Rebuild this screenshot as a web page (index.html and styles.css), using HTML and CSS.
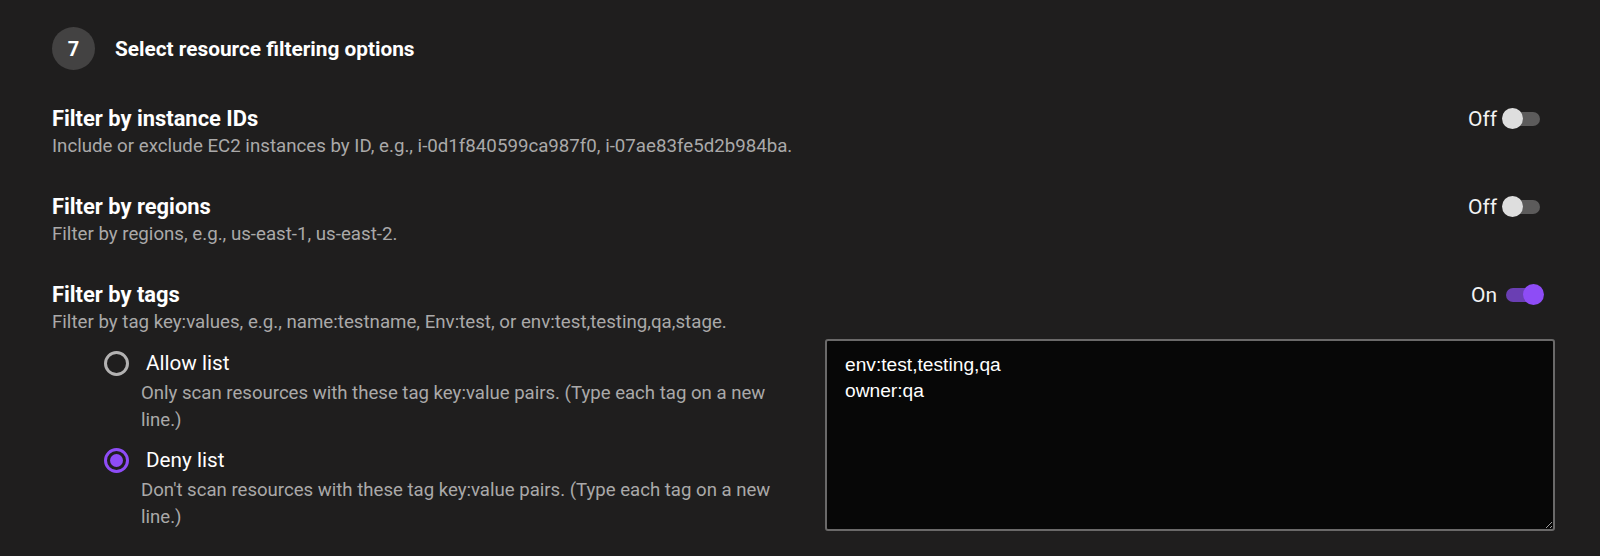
FILE: index.html
```html
<!DOCTYPE html>
<html lang="en">
<head>
    <meta charset="UTF-8">
    <title>Resource filtering</title>
    <link rel="stylesheet" href="styles.css">
</head>
<body>
    <div class="section">
        <div class="step">
            <span class="step-num">7</span>
            <h2 class="step-title">Select resource filtering options</h2>
        </div>

        <div class="filter">
            <div class="filter-text">
                <div class="filter-title">Filter by instance IDs</div>
                <div class="filter-desc">Include or exclude EC2 instances by ID, e.g., i-0d1f840599ca987f0, i-07ae83fe5d2b984ba.</div>
            </div>
            <label class="toggle">
                <span class="toggle-label">Off</span>
                <span class="switch"><span class="knob"></span></span>
            </label>
        </div>

        <div class="filter">
            <div class="filter-text">
                <div class="filter-title">Filter by regions</div>
                <div class="filter-desc">Filter by regions, e.g., us-east-1, us-east-2.</div>
            </div>
            <label class="toggle">
                <span class="toggle-label">Off</span>
                <span class="switch"><span class="knob"></span></span>
            </label>
        </div>

        <div class="filter last">
            <div class="filter-text">
                <div class="filter-title">Filter by tags</div>
                <div class="filter-desc">Filter by tag key:values, e.g., name:testname, Env:test, or env:test,testing,qa,stage.</div>
            </div>
            <label class="toggle on">
                <span class="toggle-label">On</span>
                <span class="switch"><span class="knob"></span></span>
            </label>
        </div>

        <div class="tags">
            <div class="options">
                <div class="option">
                    <span class="radio"></span>
                    <div>
                        <div class="option-label">Allow list</div>
                        <div class="option-desc">Only scan resources with these tag key:value pairs. (Type each tag on a new line.)</div>
                    </div>
                </div>
                <div class="option">
                    <span class="radio checked"></span>
                    <div>
                        <div class="option-label">Deny list</div>
                        <div class="option-desc">Don't scan resources with these tag key:value pairs. (Type each tag on a new line.)</div>
                    </div>
                </div>
            </div>
            <textarea class="tag-input">env:test,testing,qa
owner:qa</textarea>
        </div>
    </div>
</body>
</html>
```

FILE: styles.css
```css
body {
    margin: 0;
    background-color: #1f1e1e;
    color: #fff;
    font-family: Roboto, "Noto Sans", sans-serif;
}

.section {
    padding: 27px 60px 0 52px;
}

/* step header */
.step {
    display: flex;
    align-items: center;
    gap: 20px;
    margin-bottom: 35px;
}

.step-num {
    width: 43px;
    height: 43px;
    border-radius: 50%;
    background-color: #434242;
    display: flex;
    align-items: center;
    justify-content: center;
    font-size: 20px;
    font-weight: 700;
}

.step-title {
    margin: 0;
    font-size: 20.8px;
    font-weight: 700;
}

/* filter rows */
.filter {
    display: flex;
    justify-content: space-between;
    align-items: flex-start;
    margin-bottom: 33px;
}

.filter.last {
    margin-bottom: 3px;
}

.filter-title {
    font-size: 21.9px;
    font-weight: 700;
    line-height: 27px;
}

.filter-desc {
    margin-top: 1px;
    font-size: 18.7px;
    line-height: 27px;
    color: #aaa9a9;
}

.toggle {
    display: flex;
    align-items: center;
    height: 27px;
}

.toggle-label {
    font-size: 21px;
    color: #f2f2f2;
    margin-right: 9px;
}

.switch {
    position: relative;
    width: 34px;
    height: 14px;
    border-radius: 7px;
    background-color: #5c5b5b;
}

.knob {
    position: absolute;
    top: -3.5px;
    left: -4px;
    width: 21px;
    height: 21px;
    border-radius: 50%;
    background-color: #dedede;
}

.toggle.on .switch {
    background-color: #6a3fb3;
}

.toggle.on .knob {
    left: auto;
    right: -4px;
    background-color: #8e4cf6;
}

/* tag lists */
.tags {
    display: flex;
    justify-content: space-between;
    margin-right: -15px;
}

.options {
    padding: 11px 0 0 52px;
}

.option {
    display: flex;
    gap: 12px;
    margin-bottom: 14px;
}

.radio {
    flex: none;
    width: 25px;
    height: 25px;
    box-sizing: border-box;
    border: 3px solid #b3b2b2;
    border-radius: 50%;
    margin-top: 1px;
    position: relative;
}

.radio.checked {
    border-color: #8e4cf6;
}

.radio.checked::after {
    content: "";
    position: absolute;
    top: 3px;
    left: 3px;
    width: 13px;
    height: 13px;
    border-radius: 50%;
    background-color: #8e4cf6;
}

.option-label {
    font-size: 20.7px;
    line-height: 27px;
    margin-left: 5px;
}

.option-desc {
    width: 660px;
    margin-top: 3px;
    font-size: 18.6px;
    line-height: 26.5px;
    color: #aaa9a9;
}

.tag-input {
    width: 730px;
    height: 192px;
    box-sizing: border-box;
    background-color: #070707;
    color: #fff;
    border: 2px solid #6a6969;
    border-radius: 3px;
    padding: 11px 18px;
    font-family: "Liberation Sans", Arial, sans-serif;
    font-size: 19.2px;
    line-height: 26px;
    resize: both;
    outline: none;
}
```
